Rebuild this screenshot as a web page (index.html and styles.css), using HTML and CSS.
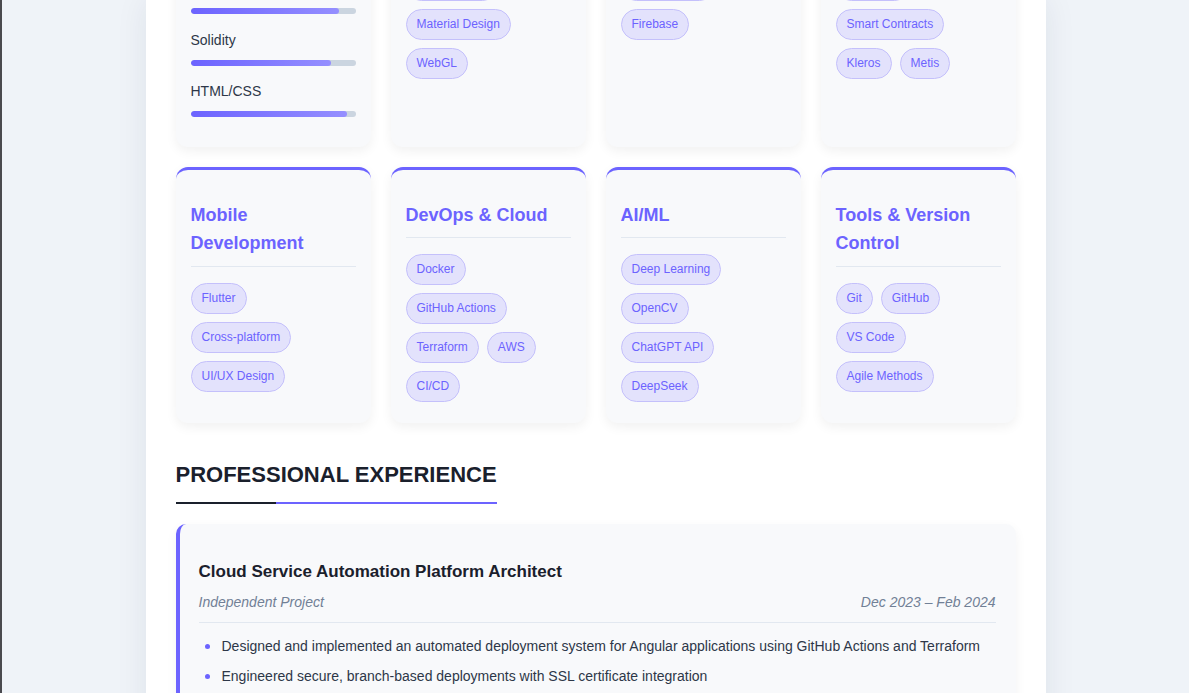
FILE: index.html
```html
<!DOCTYPE html>
<html lang="en">
<head>
<meta charset="utf-8">
<title>Resume</title>
<link rel="stylesheet" href="styles.css">
</head>
<body>
<div class="page">
  <section class="skills">
    <div class="skills-grid">
      <div class="skill-card">
        <h3>Programming Languages</h3>
        <div class="skill-list">
          <div class="skill-item"><div class="skill-name">JavaScript/TypeScript</div><div class="bar"><div class="fill" style="width:92%"></div></div></div>
          <div class="skill-item"><div class="skill-name">Python</div><div class="bar"><div class="fill" style="width:90%"></div></div></div>
          <div class="skill-item"><div class="skill-name">Solidity</div><div class="bar"><div class="fill" style="width:85%"></div></div></div>
          <div class="skill-item"><div class="skill-name">HTML/CSS</div><div class="bar"><div class="fill" style="width:95%"></div></div></div>
        </div>
      </div>
      <div class="skill-card">
        <h3>Frontend Development</h3>
        <div class="tags">
          <span class="tag">Angular</span><span class="tag">React</span>
          <span class="tag">Tailwind CSS</span>
          <span class="tag">Material Design</span>
          <span class="tag">WebGL</span>
        </div>
      </div>
      <div class="skill-card">
        <h3>Backend Development</h3>
        <div class="tags">
          <span class="tag">Node.js</span><span class="tag">Express</span>
          <span class="tag">RESTful APIs</span>
          <span class="tag">Firebase</span>
        </div>
      </div>
      <div class="skill-card">
        <h3>Blockchain Technologies</h3>
        <div class="tags">
          <span class="tag">Web3.js</span><span class="tag">dApps</span>
          <span class="tag">Ethereum</span>
          <span class="tag">Smart Contracts</span>
          <span class="tag">Kleros</span><span class="tag">Metis</span>
        </div>
      </div>

      <div class="skill-card">
        <h3>Mobile Development</h3>
        <div class="tags">
          <span class="tag">Flutter</span>
          <span class="tag">Cross-platform</span>
          <span class="tag">UI/UX Design</span>
        </div>
      </div>
      <div class="skill-card">
        <h3>DevOps &amp; Cloud</h3>
        <div class="tags">
          <span class="tag">Docker</span>
          <span class="tag">GitHub Actions</span>
          <span class="tag">Terraform</span><span class="tag">AWS</span>
          <span class="tag">CI/CD</span>
        </div>
      </div>
      <div class="skill-card">
        <h3>AI/ML</h3>
        <div class="tags">
          <span class="tag">Deep Learning</span>
          <span class="tag">OpenCV</span>
          <span class="tag">ChatGPT API</span>
          <span class="tag">DeepSeek</span>
        </div>
      </div>
      <div class="skill-card">
        <h3>Tools &amp; Version Control</h3>
        <div class="tags">
          <span class="tag">Git</span><span class="tag">GitHub</span>
          <span class="tag">VS Code</span>
          <span class="tag">Agile Methods</span>
        </div>
      </div>
    </div>
  </section>

  <section class="experience">
    <h2 class="section-title">Professional Experience</h2>
    <article class="job">
      <h3 class="job-title">Cloud Service Automation Platform Architect</h3>
      <div class="job-meta">
        <span class="company">Independent Project</span>
        <span class="date">Dec 2023 – Feb 2024</span>
      </div>
      <ul class="job-points">
        <li>Designed and implemented an automated deployment system for Angular applications using GitHub Actions and Terraform</li>
        <li>Engineered secure, branch-based deployments with SSL certificate integration</li>
        <li>Automated infrastructure provisioning and DNS configuration across environments</li>
      </ul>
    </article>
  </section>
</div>
</body>
</html>
```
FILE: styles.css
```css
html {
  overflow: hidden;
}

body {
  margin: 0;
  border-left: 2px solid #4a4a4f;
  background: #eff3f8;
  font-family: "Liberation Sans", Arial, sans-serif;
  color: #2d3748;
}

.page {
  display: flow-root;
  width: 900px;
  box-sizing: border-box;
  margin: 0 auto;
  padding: 0 30px 40px;
  background: #ffffff;
  min-height: 100vh;
  box-shadow: 0 0 30px rgba(30, 40, 60, 0.08);
}

.skills-grid {
  display: grid;
  grid-template-columns: repeat(4, 1fr);
  gap: 20px;
  margin-top: -186px;
}

.skill-card {
  background: #f8f9fb;
  border-top: 3px solid #6c63ff;
  border-radius: 12px;
  padding: 31px 15px 13px;
  box-shadow: 0 4px 12px rgba(0, 0, 0, 0.06);
}

.skill-card h3 {
  margin: 0 0 16px;
  padding-bottom: 8px;
  border-bottom: 1px solid #e2e8f0;
  font-size: 18px;
  line-height: 1.6;
  font-weight: 700;
  color: #6c63ff;
}

.skill-list {
  margin-top: -3px;
}

.skill-item {
  margin-bottom: 16.5px;
}

.skill-name {
  font-size: 14px;
  line-height: 19px;
  margin-bottom: 10px;
  color: #2d3748;
}

.bar {
  height: 6px;
  border-radius: 3px;
  background: #cbd5e0;
  overflow: hidden;
}

.fill {
  height: 100%;
  border-radius: 3px;
  background: linear-gradient(to right, #6c63ff, #958fff);
}

.tags {
  display: flex;
  flex-wrap: wrap;
  align-items: flex-start;
}

.tag {
  font-size: 12px;
  line-height: 17px;
  padding: 6px 10px;
  margin: 0 8px 8px 0;
  border: 1px solid #c4c0fb;
  border-radius: 999px;
  background: #e3e2fc;
  color: #6c63ff;
  white-space: nowrap;
}

.section-title {
  width: fit-content;
  margin: 39px 0 20px;
  padding-bottom: 14px;
  font-size: 22px;
  line-height: 26px;
  font-weight: 700;
  text-transform: uppercase;
  color: #1a202c;
  border-bottom: 2px solid #6c63ff;
  border-image: linear-gradient(to right, #1a202c 100px, #6c63ff 100px) 1;
}

.job {
  background: #f8f9fb;
  border-left: 4px solid #6c63ff;
  border-radius: 10px;
  padding: 34px 20px 20px 19px;
  box-shadow: 0 4px 12px rgba(0, 0, 0, 0.05);
}

.job-title {
  margin: 0;
  font-size: 17px;
  line-height: 27px;
  font-weight: 700;
  color: #1a202c;
}

.job-meta {
  display: flex;
  justify-content: space-between;
  margin-top: 6px;
  padding-bottom: 8px;
  border-bottom: 1px solid #e2e8f0;
  font-size: 14px;
  line-height: 22.4px;
  font-style: italic;
  color: #718096;
}

.job-points {
  list-style: none;
  margin: 12px 0 0;
  padding: 0;
}

.job-points li {
  display: flex;
  gap: 12px;
  font-size: 14px;
  line-height: 22.4px;
  margin-bottom: 7.6px;
  color: #2d3748;
}

.job-points li::before {
  content: "";
  flex: none;
  width: 5px;
  height: 5px;
  margin: 9px 0 0 6px;
  border-radius: 50%;
  background: #6c63ff;
}
```
